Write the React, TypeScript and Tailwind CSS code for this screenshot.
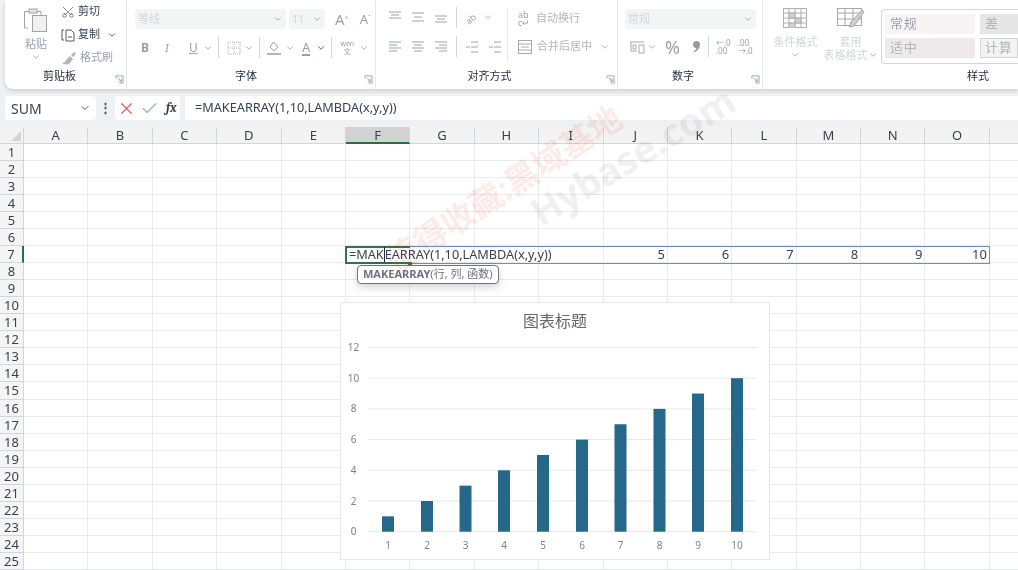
import { Scissors, ChevronDown, X, Check } from "lucide-react";
import type { ReactNode } from "react";

const FONT = { fontFamily: '"Noto Sans", "Noto Sans CJK SC", sans-serif' };
const columns = ["A", "B", "C", "D", "E", "F", "G", "H", "I", "J", "K", "L", "M", "N", "O"];
const rows = Array.from({ length: 25 }, (_, i) => i + 1);
const values: Record<string, number> = { J: 5, K: 6, L: 7, M: 8, N: 9, O: 10 };
const formula = "=MAKEARRAY(1,10,LAMBDA(x,y,y))";

const Chevron = ({ dark }: { dark?: boolean }) => (
  <ChevronDown className={`h-[10px] w-[10px] shrink-0 ${dark ? "text-gray-700" : "text-gray-400"}`} strokeWidth={2} />
);

const Sep = () => <div className="mx-[5px] h-[21px] w-px shrink-0 bg-gray-300" />;

const Launcher = () => (
  <svg viewBox="0 0 10 10" className="h-[9px] w-[9px] text-gray-400" fill="none" stroke="currentColor">
    <path d="M1 4V1h8v8H5M3 3l4 4M7 4v3H4" />
  </svg>
);

// horizontal lines used by the alignment buttons
const LinesIcon = ({ lines }: { lines: [number, number, number][] }) => (
  <svg viewBox="0 0 14 14" className="h-[14px] w-[14px] shrink-0 text-gray-400" stroke="currentColor" strokeWidth="1">
    {lines.map(([x1, x2, y]) => (
      <line key={`${x1}-${y}`} x1={x1} x2={x2} y1={y} y2={y} />
    ))}
  </svg>
);

const Group = ({ width, label, labelClass, children }: { width: string; label: string; labelClass: string; children: ReactNode }) => (
  <div className={`relative flex h-full shrink-0 flex-col border-r border-gray-200 ${width}`}>
    <div className="min-h-0 flex-1">{children}</div>
    <div className={`flex h-[24px] items-center justify-center pb-[1px] text-[11px] text-gray-800 ${labelClass}`}>{label}</div>
    <div className="absolute right-[2px] bottom-[5px]">
      <Launcher />
    </div>
  </div>
);

function Ribbon() {
  return (
    <div className="ml-[5px] flex h-[89px] rounded-bl-lg bg-white shadow-[0_2px_4px_rgba(0,0,0,0.14)]">
      {/* clipboard */}
      <Group width="w-[122px]" label="剪贴板" labelClass="pr-[12px]">
        <div className="flex pt-[3px]">
          <div className="flex w-[53px] flex-col items-center pl-[9px] text-[11px] text-gray-400">
            <svg viewBox="0 0 26 26" className="mt-[4px] h-[26px] w-[26px]" fill="none" stroke="#a3a3a3">
              <path d="M5 21H1.500V4.500H7M13 4.500h5V8" />
              <rect x="6" y="2" width="8" height="4" fill="#e5e5e5" />
              <rect x="9.500" y="8.500" width="14" height="16" fill="#f0f0f0" />
            </svg>
            <span className="mt-[3px] leading-[16px]">粘贴</span>
            <Chevron />
          </div>
          <div className="flex flex-col gap-[6px] pl-[3px] text-[11px]">
            <div className="flex h-[17px] items-center gap-[3px] text-gray-700">
              <Scissors className="h-[14px] w-[14px] rotate-[-90deg] text-gray-500" strokeWidth={1.5} />
              剪切
            </div>
            <div className="flex h-[17px] items-center gap-[3px] text-gray-700">
              <svg viewBox="0 0 14 14" className="h-[14px] w-[14px]" fill="none" stroke="#555">
                <path d="M3 12H1V2h2" />
                <path d="M5 2h5l3 3v8H5z" />
                <path d="M7 9h4" />
              </svg>
              复制
              <span className="ml-[4px]">
                <Chevron dark />
              </span>
            </div>
            <div className="flex h-[17px] items-center gap-[3px] text-gray-400">
              <svg viewBox="0 0 16 14" className="h-[14px] w-[16px]" fill="#b5b5b5">
                <path d="M9 5l3 3-4 5c-3 1-6 0-7-1 2 0 3-1 4-3zM10 4l3-3 2 2-3 3z" />
              </svg>
              格式刷
            </div>
          </div>
        </div>
      </Group>

      {/* font */}
      <Group width="w-[249px]" label="字体" labelClass="pr-[10px]">
        <div className="flex h-[30px] items-start gap-[3px] pt-[9px] pl-[8px]">
          <div className="flex h-[20px] w-[151px] shrink-0 items-center justify-between rounded-sm bg-gray-100 px-[3px] text-[11px] text-gray-300">
            等线
            <Chevron />
          </div>
          <div className="flex h-[20px] w-[36px] shrink-0 items-center justify-between rounded-sm bg-gray-100 px-[3px] text-[11px] text-gray-300">
            11
            <Chevron />
          </div>
          <div className="ml-[7px] flex h-[20px] w-[36px] shrink-0 items-center justify-between text-[15px] leading-none text-gray-400">
            <span>
              A<sup className="text-[7px]">^</sup>
            </span>
            <span className="text-[13px]">
              A<sup className="text-[7px]">ˇ</sup>
            </span>
          </div>
        </div>
        <div className="mt-[7px] flex h-[21px] items-center pl-[14px] text-[12px] text-gray-400">
          <span className="w-[24px] shrink-0 font-bold">B</span>
          <span className="w-[24px] shrink-0 font-serif italic">I</span>
          <span className="w-[14px] shrink-0 underline">U</span>
          <Chevron />
          <Sep />
          <svg viewBox="0 0 14 14" className="ml-[3px] mr-[3px] h-[14px] w-[14px] shrink-0" fill="none" stroke="#b0b0b0" strokeDasharray="1 1">
            <rect x="1" y="1" width="12" height="12" />
            <path d="M7 1v12M1 7h12" />
          </svg>
          <Chevron />
          <Sep />
          <svg viewBox="0 0 16 16" className="ml-[1px] mr-[3px] h-[16px] w-[16px] shrink-0" fill="none" stroke="#a0a0a0">
            <path d="M7.500 2l4.500 5-4 4-4-4z" />
            <path d="M1 14h14" strokeWidth="2" stroke="#b5b5b5" />
          </svg>
          <Chevron />
          <span className="ml-[7px] mr-[6px] shrink-0 border-b-2 border-gray-400 text-[13px] leading-[14px]">A</span>
          <Chevron dark />
          <Sep />
          <span className="flex w-[20px] shrink-0 flex-col items-center text-[7px] leading-[8px]">
            <span>wén</span>
            <span>文</span>
          </span>
          <span className="ml-[2px]">
            <Chevron />
          </span>
        </div>
      </Group>

      {/* alignment */}
      <Group width="w-[242px]" label="对齐方式" labelClass="pr-[14px]">
        <div className="flex h-[65px]">
          <div className="flex w-[131px] shrink-0 flex-col pl-[12px]">
            <div className="flex h-[30px] items-center gap-[9px] pt-[4px]">
              <LinesIcon lines={[[1, 13, 2], [3, 11, 5], [1, 13, 8]]} />
              <LinesIcon lines={[[1, 13, 3], [3, 11, 7], [1, 13, 11]]} />
              <LinesIcon lines={[[1, 13, 6], [3, 11, 9], [1, 13, 12]]} />
              <div className="-mx-[6px]">
                <Sep />
              </div>
              <span className="flex shrink-0 items-center gap-[3px]">
                <span className="w-[15px] rotate-[-40deg] text-[9px] leading-none text-gray-400">ab</span>
                <Chevron />
              </span>
            </div>
            <div className="mt-[6px] flex h-[21px] items-center gap-[9px]">
              <LinesIcon lines={[[1, 13, 2], [1, 9, 5], [1, 13, 8], [1, 9, 11]]} />
              <LinesIcon lines={[[1, 13, 2], [3, 11, 5], [1, 13, 8], [3, 11, 11]]} />
              <LinesIcon lines={[[1, 13, 2], [5, 13, 5], [1, 13, 8], [5, 13, 11]]} />
              <div className="-mx-[6px]">
                <Sep />
              </div>
              <LinesIcon lines={[[6, 13, 2], [1, 5, 7], [6, 13, 7], [6, 13, 12]]} />
              <LinesIcon lines={[[6, 13, 2], [1, 5, 7], [6, 13, 7], [6, 13, 12]]} />
            </div>
          </div>
          <div className="mt-[8px] mb-[3px] w-px bg-gray-200" />
          <div className="flex flex-1 flex-col pl-[10px] text-[11px] text-[#b5b5b5]">
            <div className="flex h-[30px] items-center gap-[4px] pt-[7px]">
              <span className="w-[14px] text-[9px] leading-[8px] text-gray-400">ab c↵</span>
              自动换行
            </div>
            <div className="mt-[6px] flex h-[21px] items-center gap-[5px]">
              <svg viewBox="0 0 14 14" className="h-[14px] w-[14px]" fill="none" stroke="#a8a8a8">
                <rect x="0.500" y="0.500" width="13" height="13" />
                <path d="M0 4h14M0 10h14M3 7h8" />
              </svg>
              合并后居中
              <span className="ml-[3px]">
                <Chevron />
              </span>
            </div>
          </div>
        </div>
      </Group>

      {/* number */}
      <Group width="w-[145px]" label="数字" labelClass="pr-[14px]">
        <div className="pt-[9px] pl-[7px]">
          <div className="flex h-[20px] w-[131px] items-center justify-between rounded-sm bg-gray-100 px-[3px] text-[11px] text-gray-300">
            常规
            <Chevron />
          </div>
          <div className="mt-[7px] flex h-[21px] items-center pl-[4px] text-gray-400">
            <svg viewBox="0 0 16 14" className="h-[14px] w-[16px] shrink-0" fill="none" stroke="#a8a8a8">
              <path d="M1 2h14M2 2v9h6M10 5h5v8h-5zM4 5h3v4H4z" />
            </svg>
            <span className="ml-[2px]">
              <Chevron />
            </span>
            <span className="ml-[8px] text-[18px] leading-none">%</span>
            <svg viewBox="0 0 9 13" className="ml-[12px] h-[13px] w-[9px] shrink-0" fill="#9a9a9a">
              <path d="M4.500 1a3.500 3.500 0 0 1 3.500 3.500c0 3.500-2.500 6.500-6 8l-.5-1c1.500-1 2.500-2 3-3.500A3.500 3.500 0 0 1 4.500 1z" />
            </svg>
            <span className="ml-[2px]">
              <Sep />
            </span>
            <span className="ml-[2px] w-[22px] shrink-0 text-[8px] leading-[8px]">←.0 .00</span>
            <span className="w-[16px] shrink-0 text-[8px] leading-[8px]">.00 →.0</span>
          </div>
        </div>
      </Group>

      {/* styles */}
      <div className="relative flex h-full min-w-0 flex-1 flex-col">
        <div className="flex min-h-0 flex-1">
          <div className="flex w-[58px] flex-col items-center pl-[5px] text-[11px] leading-[13px] text-gray-300">
            <svg viewBox="0 0 24 20" className="mt-[8px] h-[20px] w-[24px]" fill="#cfcfcf" stroke="#b0b0b0">
              <rect x="0.500" y="0.500" width="23" height="19" fill="none" />
              <path d="M0 5h24M0 10h24M0 15h24M6 0v20M12 0v20M18 0v20" fill="none" />
              <rect x="6" y="5" width="6" height="5" />
              <rect x="12" y="10" width="6" height="5" />
              <rect x="6" y="15" width="6" height="5" />
            </svg>
            <span className="mt-[7px] pl-[2px]">条件格式</span>
            <span className="mt-[2px]">
              <Chevron />
            </span>
          </div>
          <div className="flex w-[59px] flex-col items-center text-[11px] leading-[13px] text-gray-300">
            <svg viewBox="0 0 28 20" className="mt-[8px] h-[20px] w-[28px]" fill="none" stroke="#a8a8a8">
              <rect x="0.500" y="0.500" width="24" height="17" />
              <path d="M0 5h24M0 11h24M8 0v18M16 0v18" />
              <path d="M27 4L17 18l-5 1 2-5L25 2z" fill="#cfcfcf" />
            </svg>
            <span className="mt-[7px]">套用</span>
            <span className="flex items-center">
              表格格式
              <Chevron />
            </span>
          </div>
          <div className="mt-[9px] ml-[1px] flex h-[55px] flex-1 gap-[5px] rounded-l-sm border-y border-l border-gray-300 py-[4px] pl-[3px] text-[13px] tracking-wider text-gray-400">
            <div className="flex w-[90px] flex-col gap-[4px]">
              <div className="flex h-[20px] items-center bg-[#f8f4f6] pl-[5px]">常规</div>
              <div className="flex h-[20px] items-center bg-[#eeeaec] pl-[5px] text-[#b5b5b5]">适中</div>
            </div>
            <div className="flex flex-1 flex-col gap-[4px]">
              <div className="flex h-[20px] items-center bg-[#e6e6e6] pl-[5px] text-[#b5b5b5]">差</div>
              <div className="flex h-[20px] items-center border border-gray-300 bg-[#f3f3f3] pl-[4px] text-[#b5b5b5]">计算</div>
            </div>
          </div>
        </div>
        <div className="flex h-[24px] items-center justify-end pr-[29px] pb-[1px] text-[11px] text-gray-800">样式</div>
      </div>
    </div>
  );
}

function FormulaBar() {
  return (
    <div className="flex h-[24px] items-stretch pl-[5px]">
      <div className="flex w-[91px] items-center justify-between rounded-sm bg-white pr-[5px] pl-[6px] text-[14px] text-gray-700">
        SUM
        <ChevronDown className="h-[12px] w-[12px] text-gray-600" />
      </div>
      <div className="flex w-[19px] items-center justify-center text-[13px] font-bold text-gray-600">⋮</div>
      <div className="flex w-[65px] items-center gap-[4px] rounded-sm bg-white pl-[2px]">
        <X className="h-[19px] w-[19px] text-[#d9605f]" strokeWidth={1.5} />
        <Check className="h-[19px] w-[19px] text-[#8fbf9c]" strokeWidth={1.5} />
        <span className="ml-[3px] font-serif text-[13px] font-bold italic text-gray-700">fx</span>
      </div>
      <div className="ml-[5px] flex flex-1 items-center bg-white pl-[10px] text-[12.7px] text-gray-700">{formula}</div>
    </div>
  );
}

function ChartCard() {
  const ticks = [12, 10, 8, 6, 4, 2, 0];
  const bars = [47, 86, 124.500, 163, 202, 241, 279.500, 318.500, 357, 396];
  const base = 228.700;
  return (
    <div className="absolute top-[175px] left-[340px] h-[258px] w-[430px] border border-gray-200 bg-white">
      <svg viewBox="0 0 428 256" className="h-full w-full" style={FONT}>
        <text x="214" y="24" textAnchor="middle" fontSize="16" fill="#666">
          图表标题
        </text>
        {ticks.map((t) => (
          <g key={t}>
            <line x1="27" x2="415" y1={base - t * 15.350} y2={base - t * 15.350} stroke="#e8e8e8" />
            <text x="12.500" y={base - t * 15.350 + 3.500} textAnchor="middle" fontSize="10" fill="#808080">
              {t}
            </text>
          </g>
        ))}
        {bars.map((x, i) => (
          <g key={x}>
            <rect x={x - 6} y={base - (i + 1) * 15.350} width="12" height={(i + 1) * 15.350} fill="#25688a" />
            <text x={x} y="245.500" textAnchor="middle" fontSize="10" fill="#808080">
              {i + 1}
            </text>
          </g>
        ))}
      </svg>
    </div>
  );
}

function Sheet() {
  return (
    <div className="relative mt-[7px] flex-1 overflow-hidden bg-white">
      <div className="grid grid-cols-[24px_repeat(15,64.4px)_1fr] auto-rows-[17.04px] text-[13px] leading-[14px] text-gray-700">
        <div className="flex items-end justify-end border-r border-b border-gray-300 bg-[#f3f3f3] p-[2px]">
          <div className="h-0 w-0 border-b-[10px] border-l-[10px] border-b-gray-300 border-l-transparent" />
        </div>
        {columns.map((c) => (
          <div
            key={c}
            className={`flex items-center justify-center border-r ${
              c === "F" ? "border-b-2 border-r-gray-300 border-b-[#217346] bg-[#d2d2d2]" : "border-b border-gray-300 bg-[#f3f3f3]"
            }`}
          >
            {c}
          </div>
        ))}
        <div className="border-b border-gray-300 bg-[#f3f3f3]" />
        {rows.map((r) => (
          <Row key={r} r={r} />
        ))}
      </div>

      {/* selected range and active cell */}
      <div className="pointer-events-none absolute top-[119px] left-[345px] h-[18px] w-[645px] border border-[#6a8fc0]" />
      <div className="pointer-events-none absolute top-[119px] left-[345px] h-[18px] w-[65px] border-2 border-r-0 border-[#2f7350]" />
      <div className="pointer-events-none absolute top-[135px] left-[408px] h-[4px] w-[4px] bg-[#2f7350]" />

      <div className="absolute top-[138px] left-[357px] flex h-[19px] items-center rounded-[4px] border border-gray-500 bg-white px-[5px] text-[11px] whitespace-nowrap text-gray-500 shadow-[0_3px_8px_rgba(0,0,0,0.18)]">
        <span className="font-bold">MAKEARRAY</span>(行, 列, 函数)
      </div>

      <ChartCard />
    </div>
  );
}

function Row({ r }: { r: number }) {
  return (
    <>
      <div
        className={`flex items-center justify-center border-b border-gray-300 bg-[#f5f5f5] text-[13px] ${
          r === 7 ? "border-r-2 border-r-[#217346]" : "border-r border-r-gray-300"
        }`}
      >
        {r}
      </div>
      {columns.map((c) => (
        <div key={c} className="flex items-center justify-end border-r border-b border-[#e8eaec] px-[2px]">
          {r === 7 && c === "F" ? (
            <span className="relative z-10 -ml-[1px] flex w-full items-center pl-[1px] text-[12.7px] whitespace-nowrap">
              =MAK
              <span className="h-[15px] w-0 border-l border-gray-800" />
              EARRAY(1,10,LAMBDA(x,y,y))
            </span>
          ) : (
            r === 7 && values[c]
          )}
        </div>
      ))}
      <div className="border-b border-[#e8eaec]" />
    </>
  );
}

export default function App() {
  return (
    <div className="relative flex h-[570px] w-full flex-col overflow-hidden bg-[#eef1f3] blur-[0.4px]" style={FONT}>
      <Ribbon />
      <div className="mt-[7px]">
        <FormulaBar />
      </div>
      <Sheet />

      {/* watermark */}
      <div className="pointer-events-none absolute top-[164px] left-[367px] rotate-[-33deg] text-[33px] font-bold whitespace-nowrap text-[rgba(240,60,40,0.1)]">
        值得收藏:黑域基地
      </div>
      <div className="pointer-events-none absolute top-[127px] left-[517px] rotate-[-31deg] text-[38px] font-bold whitespace-nowrap text-[rgba(90,90,90,0.09)]">
        Hybase.com
      </div>
    </div>
  );
}
